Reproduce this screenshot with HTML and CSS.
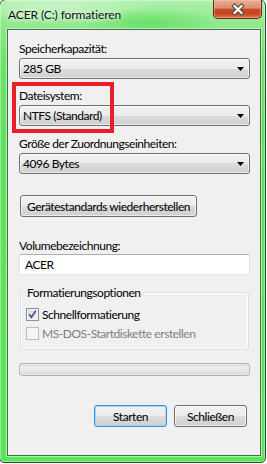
FILE: index.html
```html
<!DOCTYPE html>
<html lang="de">
<head>
<meta charset="utf-8">
<title>ACER (C:) formatieren</title>
<link rel="stylesheet" href="styles.css">
</head>
<body>
<div class="window">
  <div class="titlebar">
    <span class="title">ACER (C:) formatieren</span>
    <div class="close">
      <svg class="close-x" width="16" height="13" viewBox="0 0 16 13">
        <path d="M4.5 3 L11.5 10 M11.5 3 L4.5 10" stroke="#4a4a4a" stroke-width="4.4" stroke-linecap="square" fill="none"/>
        <path d="M4.5 3 L11.5 10 M11.5 3 L4.5 10" stroke="#ffffff" stroke-width="2.2" stroke-linecap="square" fill="none"/>
      </svg>
    </div>
  </div>
  <div class="client">
    <div class="label l1">Speicherkapazität:</div>
    <div class="combo"><span>285 GB</span><svg class="arrow" width="7" height="4" viewBox="0 0 7 4"><polygon points="0,0 7,0 3.5,4" fill="#000"/></svg></div>
    <div class="label l2">Dateisystem:</div>
    <div class="combo"><span>NTFS (Standard)</span><svg class="arrow" width="7" height="4" viewBox="0 0 7 4"><polygon points="0,0 7,0 3.5,4" fill="#000"/></svg></div>
    <div class="label l3">Größe der Zuordnungseinheiten:</div>
    <div class="combo"><span>4096 Bytes</span><svg class="arrow" width="7" height="4" viewBox="0 0 7 4"><polygon points="0,0 7,0 3.5,4" fill="#000"/></svg></div>
    <button class="btn restore">Gerätestandards wiederherstellen</button>
    <div class="label l4">Volumebezeichnung:</div>
    <div class="textbox">ACER</div>
    <fieldset class="group">
      <legend>Formatierungsoptionen</legend>
      <div class="check-row">
        <span class="checkbox">
          <svg width="11" height="11" viewBox="0 0 11 11"><path d="M2.2 5.2 L4.4 8.2 L8.8 1.8" stroke="#3d5497" stroke-width="1.7" fill="none"/></svg>
        </span>
        <span>Schnellformatierung</span>
      </div>
      <div class="check-row disabled">
        <span class="checkbox"></span>
        <span>MS-DOS-Startdiskette erstellen</span>
      </div>
    </fieldset>
    <div class="progress"></div>
    <div class="actions">
      <button class="btn default">Starten</button>
      <button class="btn">Schließen</button>
    </div>
  </div>
  <div class="highlight"></div>
</div>
</body>
</html>
```
FILE: styles.css
```css
* { box-sizing: border-box; }

html, body {
  margin: 0;
  padding: 0;
  background: #ffffff;
}

body {
  font-family: Lato, "Liberation Sans", sans-serif;
  font-size: 12px;
  line-height: 15px;
  letter-spacing: -0.45px;
  color: #000;
}

.window {
  position: relative;
  margin: -1px 0 0 -1px;
  width: 267px;
  height: 464px;
  border: 1px solid #2f4a2f;
  border-radius: 7px 7px 5px 5px;
  padding: 0 4px 6px 7px;
  display: flex;
  flex-direction: column;
  background:
    radial-gradient(ellipse 70px 14px at 150px 22px, rgba(70, 215, 70, 0.55), rgba(70, 215, 70, 0)),
    radial-gradient(ellipse 90px 18px at 60px 6px, rgba(255, 255, 255, 0.35), rgba(255, 255, 255, 0)),
    linear-gradient(#b0f1ad 0, #9cec99 14px, #8be889 28px, #6ce36a 60px, #5fe25e 140px, #5ae45a 100%);
  box-shadow: inset 0 0 0 1px rgba(255, 255, 255, 0.35);
}

.titlebar {
  height: 29px;
  display: flex;
  align-items: flex-start;
}

.title {
  margin: 7px 0 0 1px;
  color: #111;
  letter-spacing: -0.1px;
  white-space: nowrap;
  text-shadow: 0 0 5px #ffffff, 0 0 9px rgba(255, 255, 255, 0.8);
}

.close {
  margin-left: auto;
  margin-right: -1px;
  width: 49px;
  height: 19px;
  border: 1px solid #6b2814;
  border-top: 0;
  border-radius: 0 0 5px 5px;
  background: linear-gradient(#e9ab93, #da8f73 45%, #c44a22 52%, #c6461d 75%, #dc7a4f);
  box-shadow: inset 0 0 0 1px rgba(255, 220, 200, 0.35);
  display: flex;
  justify-content: center;
  align-items: center;
  padding-top: 1px;
}

.close-x { display: block; overflow: visible; }

.client {
  flex: 1;
  background: #f0f0f0;
  border: 1px solid #4a684a;
  box-shadow: 0 0 0 1px rgba(220, 255, 220, 0.6);
  padding: 11px 10px 0 11px;
  display: flex;
  flex-direction: column;
}

.label { margin-bottom: 2px; white-space: nowrap; }
.l2 { margin-top: 9px; }
.l3 { margin-top: 10px; }
.l4 { margin-top: 21px; margin-bottom: 1px; }

.combo {
  height: 21px;
  border: 1px solid #707070;
  border-radius: 3px;
  background: linear-gradient(#f2f2f2, #ebebeb 50%, #dddddd 50%, #cfcfcf);
  box-shadow: inset 0 0 0 1px rgba(255, 255, 255, 0.6);
  display: flex;
  align-items: center;
  padding: 0 5px 0 3px;
}

.arrow { margin-left: auto; display: block; }

.btn {
  font: inherit;
  letter-spacing: inherit;
  color: #000;
  height: 22px;
  padding: 0;
  white-space: nowrap;
  border: 1px solid #707070;
  border-radius: 3px;
  background: linear-gradient(#f2f2f2, #ebebeb 50%, #dddddd 50%, #cfcfcf);
  box-shadow: inset 0 0 0 1px rgba(255, 255, 255, 0.6);
}

.restore {
  width: 177px;
  margin: 21px 0 0 1px;
  align-self: flex-start;
}

.textbox {
  height: 21px;
  border: 1px solid;
  border-color: #abadb3 #dbdfe6 #e3e9ef #e2e3ea;
  border-radius: 2px;
  background: #fff;
  padding: 2px 0 0 5px;
}

.group {
  margin: 10px 1px 0;
  min-width: 0;
  padding: 7px 0 8px 5px;
  border: 1px solid #d5dfe5;
  border-radius: 3px;
  box-shadow: inset 0 0 0 1px #ffffff;
}

.group legend {
  padding: 0 2px;
  margin-left: -1px;
  line-height: 15px;
  background: #f0f0f0;
}

.check-row {
  display: flex;
  align-items: center;
  gap: 3px;
  height: 15px;
  white-space: nowrap;
}

.check-row + .check-row { margin-top: 4px; }

.checkbox {
  width: 13px;
  height: 13px;
  flex: none;
  border: 1px solid #8e8f8f;
  background: linear-gradient(135deg, #d6d9de, #f7f7f8);
  box-shadow: inset 0 0 0 1px #f4f4f4;
  display: flex;
  align-items: center;
  justify-content: center;
}

.checkbox svg { display: block; }

.disabled { color: #7d7d7d; }
.disabled .checkbox {
  border-color: #bcbcbc;
  background: #f4f4f4;
}

.progress {
  margin-top: 13px;
  height: 13px;
  border: 1px solid #b2b2b2;
  border-radius: 3px;
  background: linear-gradient(#d4d4d4, #eeeeee 30%, #e6e6e6 60%, #d6d6d6);
  box-shadow: inset 0 0 0 1px rgba(255, 255, 255, 0.4);
}

.actions {
  margin-top: 29px;
  display: flex;
  justify-content: flex-end;
  gap: 7px;
  padding-right: 3px;
}

.actions .btn { width: 73px; }

.btn.default {
  border-color: #3c8fd0;
  box-shadow: inset 0 0 0 1px #98dcf7;
}

.highlight {
  position: absolute;
  left: 12px;
  top: 82px;
  width: 102px;
  height: 51px;
  border: 4px solid #e8202a;
}
```
